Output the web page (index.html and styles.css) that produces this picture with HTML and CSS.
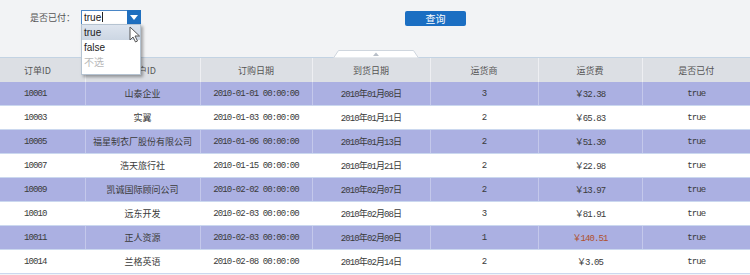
FILE: index.html
```html
<!DOCTYPE html>
<html lang="zh-CN">
  <head>
    <meta charset="UTF-8" />
    <title>订单查询</title>
    <link rel="stylesheet" href="styles.css">
  </head>
  <body>
    <div class="toolbar">
      <span class="field-label">是否已付：</span>
      <div class="combo">
        <div class="combo-input">true<span class="caret"></span></div>
        <div class="combo-btn">
          <svg width="8" height="5" viewBox="0 0 8 5"><polygon points="0,0 8,0 4,5" fill="#fff" /></svg>
        </div>
        <ul class="combo-list">
          <li class="active">true</li>
          <li>false</li>
          <li class="muted">不选</li>
        </ul>
        <svg class="pointer" width="12" height="17" viewBox="0 0 12 17">
          <path d="M1 1 L1 14 L4 11 L6.5 16 L8.5 15 L6 10 L10.5 10 Z" fill="#fff" stroke="#555" stroke-width="1" stroke-linejoin="round" />
        </svg>
      </div>
      <button class="query-btn">查询</button>
    </div>

    <div class="grid">
      <svg class="grid-handle" width="86" height="8" viewBox="0 0 86 8">
        <polygon points="0.5,8 5.5,0.5 80.5,0.5 85.5,8" fill="#fff" stroke="#cfd6de" />
        <polygon points="40,6 43,2.5 46,6" fill="#b8bfc8" />
      </svg>
      <table>
        <colgroup>
          <col style="width: 85px" />
          <col style="width: 115px" />
          <col style="width: 112px" />
          <col style="width: 118px" />
          <col style="width: 108px" />
          <col style="width: 104px" />
          <col style="width: 108px" />
        </colgroup>
        <thead>
          <tr>
            <th class="id">订单ID</th>
            <th>客户ID</th>
            <th>订购日期</th>
            <th>到货日期</th>
            <th>运货商</th>
            <th>运货费</th>
            <th>是否已付</th>
          </tr>
        </thead>
        <tbody id="rows"></tbody>
      </table>
    </div>

    <script>
      const orders = [
        ["10001", "山泰企业", "2010-01-01 00:00:00", "2010年01月08日", "3", "￥32.38"],
        ["10003", "实翼", "2010-01-03 00:00:00", "2010年01月11日", "2", "￥65.83"],
        ["10005", "福星制衣厂股份有限公司", "2010-01-06 00:00:00", "2010年01月13日", "2", "￥51.30"],
        ["10007", "浩天旅行社", "2010-01-15 00:00:00", "2010年01月21日", "2", "￥22.98"],
        ["10009", "凯诚国际顾问公司", "2010-02-02 00:00:00", "2010年02月07日", "2", "￥13.97"],
        ["10010", "远东开发", "2010-02-03 00:00:00", "2010年02月08日", "3", "￥81.91"],
        ["10011", "正人资源", "2010-02-03 00:00:00", "2010年02月09日", "1", "￥140.51", true],
        ["10014", "兰格英语", "2010-02-08 00:00:00", "2010年02月14日", "2", "￥3.05"],
      ];

      document.getElementById("rows").innerHTML = orders
        .map(
          (o, i) => `
          <tr class="${i % 2 === 0 ? "alt" : ""}">
            <td class="id">${o[0]}</td>
            <td class="name">${o[1]}</td>
            <td>${o[2]}</td>
            <td>${o[3]}</td>
            <td>${o[4]}</td>
            <td class="${o[6] ? "high" : ""}">${o[5]}</td>
            <td>true</td>
          </tr>`
        )
        .join("");
    </script>
  </body>
</html>
```

FILE: styles.css
```css
body {
  margin: 0;
  width: 750px;
  height: 275px;
  overflow: hidden;
  background: #f2f3f5;
  font-family: "Liberation Mono", "Noto Sans CJK SC", monospace;
  color: #3a3a3a;
}

.toolbar {
  display: flex;
  align-items: flex-start;
  height: 57px;
  box-sizing: border-box;
  padding: 10px 0 0 30px;
}
.field-label {
  width: 51px;
  line-height: 15px;
  font-family: "Noto Sans CJK SC", sans-serif;
  font-size: 9px;
  color: #555;
}

.combo {
  position: relative;
  display: flex;
  width: 60px;
  height: 15px;
}
.combo-input {
  flex: 1;
  box-sizing: border-box;
  border: 1px solid #4a86c6;
  border-right: none;
  background: #fff;
  padding-left: 2px;
  font-family: "Liberation Sans", sans-serif;
  font-size: 10px;
  line-height: 13px;
  color: #222;
}
.caret {
  display: inline-block;
  width: 1px;
  height: 10px;
  margin-left: 1px;
  vertical-align: -1px;
  background: #222;
}
.combo-btn {
  width: 14px;
  background: #1f6fbf;
  display: flex;
  align-items: center;
  justify-content: center;
}
.combo-list {
  position: absolute;
  top: 14px;
  left: 0;
  width: 60px;
  margin: 0;
  padding: 0 0 4px;
  list-style: none;
  box-sizing: border-box;
  background: #fff;
  border: 1px solid #b5c3d1;
  box-shadow: 2px 2px 3px rgba(0, 0, 0, 0.35);
  z-index: 10;
  font-family: "Liberation Sans", "Noto Sans CJK SC", sans-serif;
  font-size: 10px;
}
.combo-list li {
  height: 15px;
  line-height: 15px;
  padding-left: 2px;
  color: #222;
}
.combo-list li.active {
  background: linear-gradient(#dde4ee, #ccd6e3);
}
.combo-list li.muted {
  color: #b8b8b8;
}
.pointer {
  position: absolute;
  left: 48px;
  top: 16px;
  z-index: 11;
}

.query-btn {
  margin: 1px 0 0 264px;
  width: 61px;
  height: 15px;
  padding: 0;
  border: none;
  border-radius: 2px;
  background: #1b6ec2;
  color: #fff;
  font-family: "Noto Sans CJK SC", sans-serif;
  font-size: 10px;
  line-height: 15px;
}

.grid {
  position: relative;
}
.grid-handle {
  position: absolute;
  left: 333px;
  top: -7px;
}
.grid table {
  width: 750px;
  table-layout: fixed;
  border-collapse: collapse;
  font-size: 9px;
  letter-spacing: -0.9px;
}
.grid th {
  height: 24px;
  padding: 0;
  border-top: 1px solid #c3d3e3;
  border-left: 1px solid rgba(255, 255, 255, 0.5);
  background: #dcdfe4;
  font-family: "Noto Sans CJK SC", "Liberation Mono", monospace;
  font-weight: normal;
  letter-spacing: 0;
  color: #555;
  text-align: center;
}
.grid td {
  height: 23px;
  padding: 0;
  border-bottom: 1px solid #cbd8ef;
  border-left: 1px solid rgba(255, 255, 255, 0.3);
  background: #fff;
  text-align: center;
  white-space: nowrap;
}
.grid tr.alt td {
  background: #abb0e2;
}
.grid th.id,
.grid td.id {
  text-align: left;
  padding-left: 24px;
  border-left: none;
}
.grid td.name {
  letter-spacing: 0;
}
.grid td.high {
  color: #b0502e;
}
```
